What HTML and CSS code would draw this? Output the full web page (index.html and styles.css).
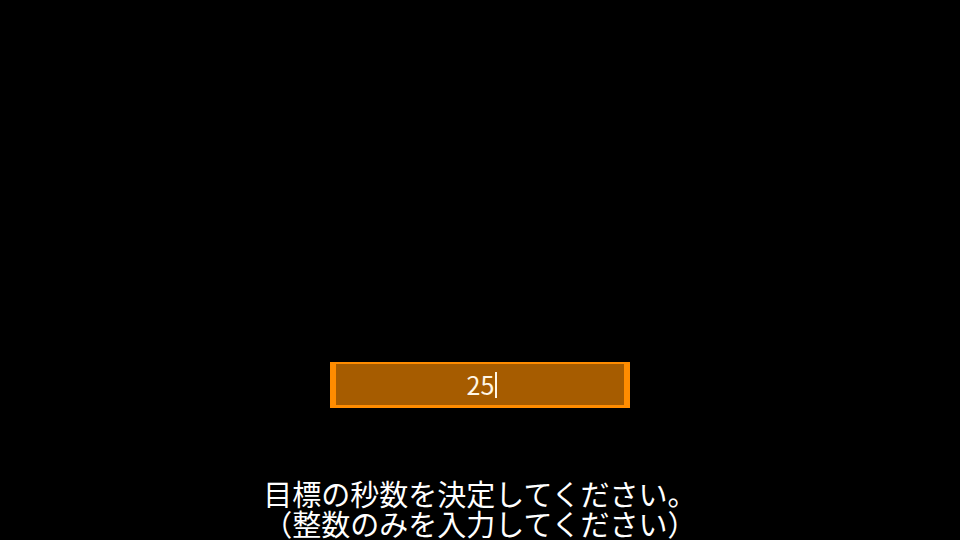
FILE: index.html
```html
<!DOCTYPE html>
<html lang="ja">
<head>
<meta charset="utf-8">
<link rel="stylesheet" href="styles.css">
</head>
<body>
<main class="screen">
  <div class="field"><span class="value">25</span><span class="caret"></span></div>
  <p class="prompt">目標の秒数を決定してください。<br>（整数のみを入力してください）</p>
</main>
</body>
</html>
```

FILE: styles.css
```css
html, body {
  margin: 0;
  padding: 0;
  background: #000;
  width: 960px;
  height: 540px;
  overflow: hidden;
}
.screen {
  display: flex;
  flex-direction: column;
  align-items: center;
  padding-top: 362px;
  font-family: "Noto Sans CJK JP", "Noto Sans", sans-serif;
  color: #fff;
}
.field {
  box-sizing: border-box;
  width: 300px;
  height: 46px;
  background: #a65c00;
  border-style: solid;
  border-color: #ff8c00;
  border-width: 2px 6px 3px 6px;
  display: flex;
  align-items: center;
  justify-content: center;
  color: #fff6e6;
  font-size: 25px;
}
.value {
  line-height: 1;
  padding-left: 4px;
}
.caret {
  width: 2px;
  height: 26px;
  background: #fff6e6;
  margin-left: 1px;
}
.prompt {
  margin: 70px 0 0;
  font-size: 29px;
  line-height: 30px;
  text-align: center;
}
```
